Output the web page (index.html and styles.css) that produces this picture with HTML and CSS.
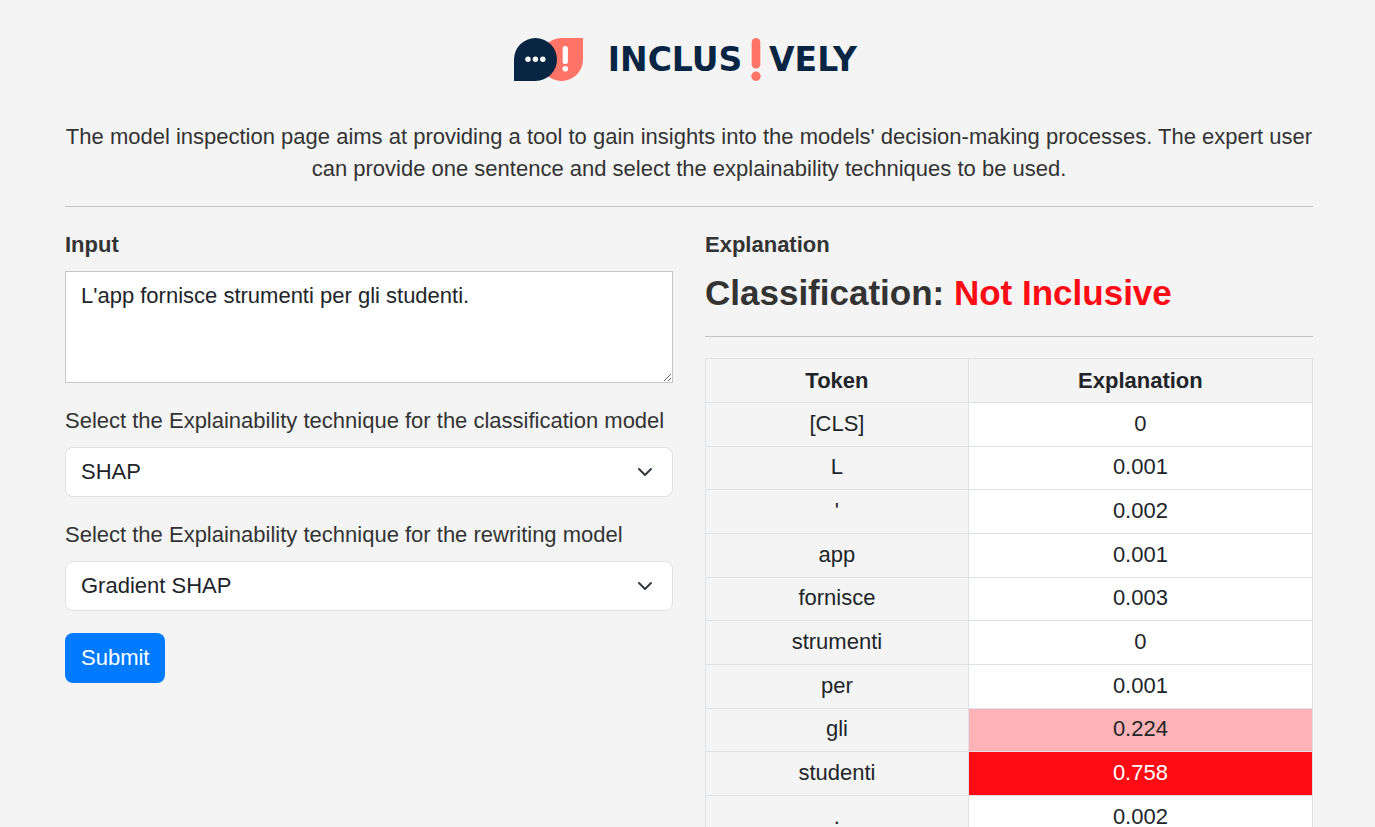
FILE: index.html
```html
<!DOCTYPE html>
<html lang="en">
<head>
<meta charset="utf-8">
<meta name="viewport" content="width=device-width, initial-scale=1">
<title>Inclusively – Model inspection</title>
<link rel="stylesheet" href="styles.css">
</head>
<body>
<div class="page">
  <header class="intro">
    <svg class="logo" viewBox="0 0 350 44" role="img" aria-label="Inclusively">
      <path class="coral" d="M47.500 1H69V22.500A21.500 21.500 0 1 1 47.500 1Z"/>
      <path class="navy" d="M21.500 1A21.500 21.500 0 0 1 21.500 44H0V22.500A21.500 21.500 0 0 1 21.500 1Z"/>
      <circle class="white" cx="14" cy="22.300" r="2.700"/>
      <circle class="white" cx="21.400" cy="22.300" r="2.700"/>
      <circle class="white" cx="28.800" cy="22.300" r="2.700"/>
      <rect class="white" x="48.700" y="9" width="5.200" height="18" rx="2.600"/>
      <circle class="white" cx="51.300" cy="31.700" r="2.800"/>
      <text class="wordmark" x="161" y="34" text-anchor="middle">INCLUS</text>
      <rect class="coral" x="237.700" y="1" width="8.600" height="30.500" rx="4.300"/>
      <circle class="coral" cx="242" cy="39.200" r="4.700"/>
      <text class="wordmark" x="299" y="34" text-anchor="middle">VELY</text>
    </svg>
    <p class="lead">The model inspection page aims at providing a tool to gain insights into the models' decision-making processes. The expert user can provide one sentence and select the explainability techniques to be used.</p>
  </header>
  <hr class="rule">
  <main class="columns">
    <form class="form">
      <label class="label strong" for="sentence">Input</label>
      <textarea class="sentence" id="sentence">L'app fornisce strumenti per gli studenti.</textarea>
      <label class="label" for="classification">Select the Explainability technique for the classification model</label>
      <div class="select-box">
        <select class="select" id="classification"><option>SHAP</option></select>
        <svg class="chevron" viewBox="0 0 16 16" aria-hidden="true"><path d="m2 5 6 6 6-6"/></svg>
      </div>
      <label class="label" for="rewriting">Select the Explainability technique for the rewriting model</label>
      <div class="select-box">
        <select class="select" id="rewriting"><option>Gradient SHAP</option></select>
        <svg class="chevron" viewBox="0 0 16 16" aria-hidden="true"><path d="m2 5 6 6 6-6"/></svg>
      </div>
      <button class="submit" type="button">Submit</button>
    </form>
    <section class="result">
      <div class="label strong">Explanation</div>
      <h2 class="verdict">Classification: <span class="negative">Not Inclusive</span></h2>
      <hr class="rule">
      <table class="tokens">
        <thead><tr><th class="token">Token</th><th>Explanation</th></tr></thead>
        <tbody>
          <tr><td>[CLS]</td><td class="score">0</td></tr>
          <tr><td>L</td><td class="score">0.001</td></tr>
          <tr><td>'</td><td class="score">0.002</td></tr>
          <tr><td>app</td><td class="score">0.001</td></tr>
          <tr><td>fornisce</td><td class="score">0.003</td></tr>
          <tr><td>strumenti</td><td class="score">0</td></tr>
          <tr><td>per</td><td class="score">0.001</td></tr>
          <tr><td>gli</td><td class="score medium">0.224</td></tr>
          <tr><td>studenti</td><td class="score high">0.758</td></tr>
          <tr><td>.</td><td class="score">0.002</td></tr>
        </tbody>
      </table>
    </section>
  </main>
</div>
</body>
</html>
```
FILE: styles.css
```css
* { box-sizing: border-box; }
body {
  margin: 0;
  background: #f4f4f4;
  color: #333;
  font: 22px/32px "Liberation Sans", Arial, sans-serif;
}
.page { padding: 37px 62px 0 65px; }
.intro { display: flex; flex-direction: column; align-items: center; gap: 40px; }
.logo { width: 350px; height: 44px; }
.navy { fill: #082644; }
.coral { fill: #ff7467; }
.white { fill: #fff; }
.wordmark { fill: #082644; font: bold 33px "DejaVu Sans", sans-serif; }
.lead { margin: 0; text-align: center; }
.rule { height: 1px; margin: 21px 0 22px; border: 0; background: #c3c3c3; }
.result .rule { margin-bottom: 21px; }
.columns { display: grid; grid-template-columns: 1fr 1fr; gap: 32px; }
.form { display: flex; flex-direction: column; align-items: flex-start; }
.label { display: block; margin-bottom: 10px; }
.strong { font-weight: bold; }
.sentence {
  display: block;
  width: 100%;
  height: 112px;
  margin: 0 0 22px;
  padding: 8px 15px;
  border: 1px solid #c6c6c6;
  background: #fff;
  color: #212529;
  font: inherit;
  resize: vertical;
}
.select-box { display: grid; width: 100%; margin-bottom: 22px; align-items: center; }
.select {
  grid-area: 1 / 1;
  width: 100%;
  height: 50px;
  padding: 0 48px 0 15px;
  border: 1px solid #dee2e6;
  border-radius: 8px;
  appearance: none;
  background: #fff;
  color: #212529;
  font: inherit;
}
.chevron {
  grid-area: 1 / 1;
  justify-self: end;
  width: 16px;
  height: 16px;
  margin-right: 20px;
  fill: none;
  stroke: #343a40;
  stroke-width: 2;
  stroke-linecap: round;
  stroke-linejoin: round;
  pointer-events: none;
}
.submit {
  height: 50px;
  padding: 0 16px;
  border: 0;
  border-radius: 8px;
  background: #007bff;
  color: #fff;
  font: inherit;
}
.verdict { margin: 0; font-size: 35px; line-height: 44px; font-weight: bold; }
.negative { color: #ff0b14; }
.tokens {
  width: 100%;
  border-collapse: collapse;
  table-layout: fixed;
  color: #212529;
  text-align: center;
}
.tokens th, .tokens td { padding: 5px; border: 1px solid #dee2e6; line-height: 33px; }
.tokens tbody td { padding: 4px 5px 6px; }
.tokens tbody tr:nth-child(3n + 2) td { line-height: 32px; }
.token { width: 43.300%; }
.score { background: #fff; }
.medium { background: #ffb3b6; }
.high { background: #ff0b14; color: #fff; }
```
